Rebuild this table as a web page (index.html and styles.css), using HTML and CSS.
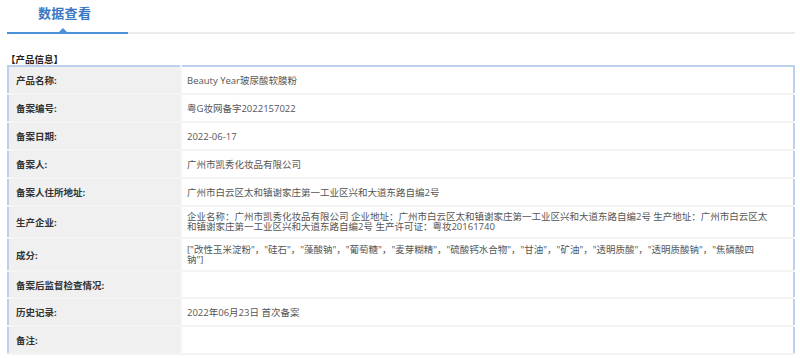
FILE: index.html
```html
<!DOCTYPE html>
<html lang="zh">
<head>
<meta charset="utf-8">
<title>数据查看</title>
<link rel="stylesheet" href="styles.css">
</head>
<body>
<div class="tabs">
  <div class="tab active">数据查看<span class="arrow"></span></div>
</div>
<div class="section-title">【产品信息】</div>
<table class="info">
  <tr class="h28"><th>产品名称:</th><td>Beauty Year玻尿酸软膜粉</td></tr>
  <tr class="h28"><th>备案编号:</th><td>粤G妆网备字2022157022</td></tr>
  <tr class="h28"><th>备案日期:</th><td>2022-06-17</td></tr>
  <tr class="h28"><th>备案人:</th><td>广州市凯秀化妆品有限公司</td></tr>
  <tr class="h28"><th>备案人住所地址:</th><td>广州市白云区太和镇谢家庄第一工业区兴和大道东路自编2号</td></tr>
  <tr class="h32"><th>生产企业:</th><td><div class="wrap wide">企业名称：广州市凯秀化妆品有限公司 企业地址：广州市白云区太和镇谢家庄第一工业区兴和大道东路自编2号 生产地址：广州市白云区太和镇谢家庄第一工业区兴和大道东路自编2号 生产许可证：粤妆20161740</div></td></tr>
  <tr class="h33"><th>成分:</th><td><div class="wrap">["改性玉米淀粉"，"硅石"，"藻酸钠"，"葡萄糖"，"麦芽糊精"，"硫酸钙水合物"，"甘油"，"矿油"，"透明质酸"，"透明质酸钠"，"焦磷酸四钠"]</div></td></tr>
  <tr class="h27"><th>备案后监督检查情况:</th><td></td></tr>
  <tr class="h28"><th>历史记录:</th><td>2022年06月23日 首次备案</td></tr>
  <tr class="h28"><th>备注:</th><td></td></tr>
</table>
</body>
</html>
```
FILE: styles.css
```css
html, body {
  margin: 0;
  padding: 0;
  background: #fff;
  font-family: "Open Sans", "Noto Sans CJK SC", sans-serif;
}
.tabs {
  margin: 0 5px 0 7px;
  height: 34px;
  border-bottom: 2px solid #ebebeb;
  box-sizing: border-box;
  display: flex;
}
.tab {
  position: relative;
  width: 121px;
  height: 34px;
  box-sizing: border-box;
  border-bottom: 2px solid #4a90d9;
  margin-bottom: -2px;
  padding-left: 31px;
  font-size: 13px;
  line-height: 26px;
  font-weight: bold;
  color: #3a78c4;
  letter-spacing: 0.3px;
}
.arrow {
  position: absolute;
  left: 52px;
  bottom: 0;
  width: 0;
  height: 0;
  border-left: 4px solid transparent;
  border-right: 4px solid transparent;
  border-bottom: 4px solid #4a90d9;
}
.section-title {
  margin: 20px 0 0 6px;
  font-size: 9.5px;
  line-height: 11px;
  font-weight: bold;
  color: #222;
}
.info {
  margin: 0 0 0 7px;
  width: 788px;
  border-collapse: collapse;
  border: 2px solid #bcd1ee;
  font-size: 9.5px;
}
.info th, .info td {
  padding: 0;
  border-bottom: 2px solid #f4f4f4;
  vertical-align: middle;
}
.info th {
  width: 164px;
  background: #f0f0f0;
  text-align: left;
  padding-left: 7px;
  font-weight: bold;
  color: #333;
  border-right: 2px solid #f4f4f4;
}
.info td {
  padding-left: 5px;
  color: #555;
  background: #fff;
}
.info .wrap {
  width: 570px;
  line-height: 10px;
}
.info .wrap.wide {
  width: 582px;
}
.h28 { height: 28px; }
.h32 { height: 32px; }
.h33 { height: 33px; }
.h27 { height: 27px; }
```
